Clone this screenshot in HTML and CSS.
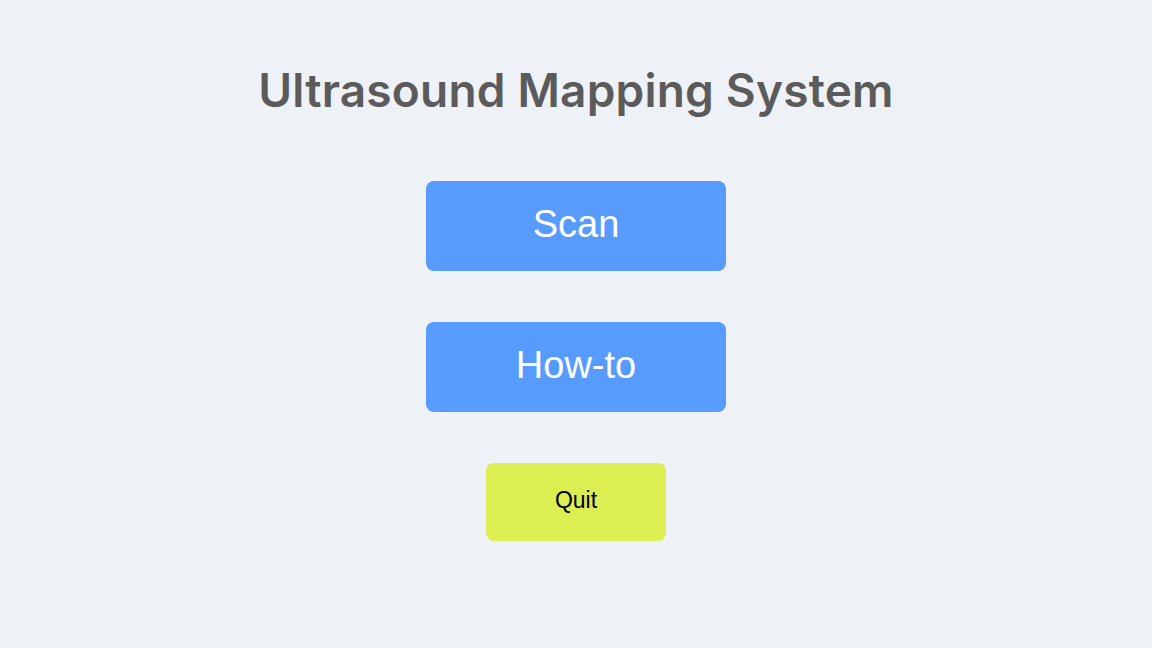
FILE: index.html
```html
<!DOCTYPE html>
<html>
<head>
<meta charset="utf-8">
<link rel="stylesheet" href="styles.css">
</head>
<body>
<main class="menu">
  <h1 class="title">Ultrasound Mapping System</h1>
  <div class="buttons">
    <button class="btn btn-primary">Scan</button>
    <button class="btn btn-primary">How-to</button>
    <button class="btn btn-quit">Quit</button>
  </div>
</main>
</body>
</html>
```

FILE: styles.css
```css
html, body {
  margin: 0;
  padding: 0;
  width: 1152px;
  height: 648px;
  background: #eef1f6;
  overflow: hidden;
}
.menu {
  display: flex;
  flex-direction: column;
  align-items: center;
  padding-top: 62px;
}
.title {
  margin: 0;
  font-family: Inter, "Noto Sans", sans-serif;
  font-weight: 600;
  font-size: 46px;
  line-height: 56px;
  letter-spacing: 0.2px;
  color: #5b5b5b;
}
.buttons {
  display: flex;
  flex-direction: column;
  align-items: center;
  gap: 51px;
  margin-top: 63px;
}
.btn {
  border: none;
  border-radius: 8px;
  font-family: "Liberation Sans", Arial, sans-serif;
  display: flex;
  align-items: center;
  justify-content: center;
  padding: 0 0 4px 0;
}
.btn-primary {
  width: 300px;
  height: 90px;
  background: #579bff;
  color: #ffffff;
  font-size: 38px;
}
.btn-quit {
  width: 180px;
  height: 78px;
  background: #dbee52;
  color: #000000;
  font-size: 23px;
}
```
